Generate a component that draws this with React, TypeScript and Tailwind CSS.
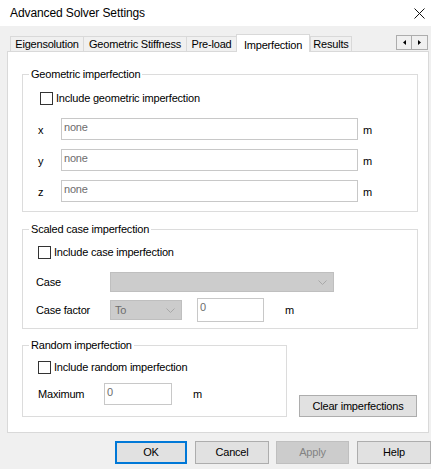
import React from 'react';

const font = { fontFamily: '"Liberation Sans", Arial, sans-serif' };

function CheckBox({ label }: { label: string }) {
    return (
        <label className="flex items-center h-[13px]">
            <span className="w-[13px] h-[13px] border border-[#333333] bg-white shrink-0" />
            <span className="ml-[3px] leading-none">{label}</span>
        </label>
    );
}

function Chevron() {
    return (
        <svg width="9" height="5" viewBox="0 0 9 5" className="shrink-0">
            <path d="M0.5 0.5 L4.5 4.5 L8.5 0.5" fill="none" stroke="#a8a8a8" strokeWidth="1" />
        </svg>
    );
}

function TextBox({ value, placeholder, className }: { value?: string; placeholder?: string; className: string }) {
    return (
        <div className={`border border-[#c8c8c8] bg-white flex items-start pl-[2px] pt-[3px] ${className}`}>
            <span className="text-[#6d6d6d] leading-none">{value ?? placeholder}</span>
        </div>
    );
}

function Group({ title, className, children }: { title: string; className: string; children: React.ReactNode }) {
    return (
        <div className={`relative border border-[#dcdcdc] ${className}`}>
            <span className="absolute -top-[8px] left-[6px] px-[2px] bg-white leading-[14px]">{title}</span>
            {children}
        </div>
    );
}

const tabs = ['Eigensolution', 'Geometric Stiffness', 'Pre-load', 'Imperfection', 'Results'];
const tabWidths = ['w-[73px]', 'w-[103px]', 'w-[50px]', 'w-[74px]', 'w-[42px]'];

export default function App() {
    return (
        <div className="w-[431px] h-[469px] bg-[#f0f0f0] flex flex-col text-[11px] tracking-[-0.2px] text-black" style={font}>
            {/* title bar */}
            <div className="h-[26px] bg-white flex items-center justify-between pl-[10px] pr-[3px] shrink-0">
                <span className="text-[12px] tracking-[-0.1px]">Advanced Solver Settings</span>
                <div className="w-[16px] h-[16px] flex items-center justify-center mr-[1px]">
                    <svg width="11" height="11" viewBox="0 0 11 11">
                        <path d="M0.5 0.5 L10.5 10.5 M10.5 0.5 L0.5 10.5" stroke="#111111" strokeWidth="1" />
                    </svg>
                </div>
            </div>

            {/* tab strip */}
            <div className="flex items-end h-[17px] mt-[8px] pl-[10px] pr-[3px]">
                {tabs.map((t, i) => {
                    const active = t === 'Imperfection';
                    return active ? (
                        <div
                            key={t}
                            className={`${tabWidths[i]} h-[18px] -mb-px relative z-10 bg-white border-x border-t border-[#d9d9d9] flex items-start justify-center pt-[2px]`}
                        >
                            {t}
                        </div>
                    ) : (
                        <div
                            key={t}
                            className={`${tabWidths[i]} h-[15px] border-t border-l ${i === tabs.length - 1 ? 'border-r' : ''} border-[#d9d9d9] flex items-center justify-center pt-[1px]`}
                        >
                            {t}
                        </div>
                    );
                })}
                <div className="ml-auto mb-[1px] flex h-[15px]">
                    <div className="w-[16px] h-[15px] border border-[#adadad] flex items-center justify-center">
                        <svg width="3" height="5" viewBox="0 0 3 5"><path d="M3 0 L0 2.5 L3 5 Z" fill="#000" /></svg>
                    </div>
                    <div className="w-[16px] h-[15px] border border-l-0 border-[#adadad] flex items-center justify-center">
                        <svg width="3" height="5" viewBox="0 0 3 5"><path d="M0 0 L3 2.5 L0 5 Z" fill="#000" /></svg>
                    </div>
                </div>
            </div>

            {/* tab panel */}
            <div className="ml-[7px] w-[422px] h-[382px] bg-white border border-[#d9d9d9] pt-[22px] pl-[14px] flex flex-col">
                <Group title="Geometric imperfection" className="w-[396px] h-[138px] pt-[17px] pl-[17px]">
                    <CheckBox label="Include geometric imperfection" />
                    <div className="flex flex-col gap-[9px] mt-[13px] -ml-[2px]">
                        {['x', 'y', 'z'].map((a) => (
                            <div key={a} className="flex items-center h-[22px]">
                                <span className="w-[23px] pt-[3px]">{a}</span>
                                <TextBox placeholder="none" className="w-[297px] h-[22px]" />
                                <span className="ml-[5px] pt-[3px]">m</span>
                            </div>
                        ))}
                    </div>
                </Group>

                <Group title="Scaled case imperfection" className="w-[396px] h-[100px] mt-[17px] pt-[16px] pl-[15px]">
                    <CheckBox label="Include case imperfection" />
                    <div className="flex items-center h-[20px] mt-[13px] -ml-[2px]">
                        <span className="w-[74px]">Case</span>
                        <div className="w-[224px] h-[20px] bg-[#cccccc] border border-[#bfbfbf] flex items-center justify-end pr-[6px]">
                            <Chevron />
                        </div>
                    </div>
                    <div className="flex items-center h-[24px] mt-[6px] -ml-[2px]">
                        <span className="w-[74px]">Case factor</span>
                        <div className="w-[72px] h-[20px] bg-[#cccccc] border border-[#bfbfbf] flex items-center justify-between pl-[4px] pr-[6px]">
                            <span className="text-[#6d6d6d]">To</span>
                            <Chevron />
                        </div>
                        <TextBox value="0" className="w-[67px] h-[24px] ml-[15px]" />
                        <span className="ml-[21px]">m</span>
                    </div>
                </Group>

                <div className="flex items-end mt-[16px]">
                    <Group title="Random imperfection" className="w-[265px] h-[72px] pt-[15px] pl-[15px]">
                        <CheckBox label="Include random imperfection" />
                        <div className="flex items-center h-[22px] mt-[9px]">
                            <span className="w-[66px]">Maximum</span>
                            <TextBox value="0" className="w-[68px] h-[22px]" />
                            <span className="ml-[21px]">m</span>
                        </div>
                    </Group>
                    <button className="ml-[12px] w-[118px] h-[22px] bg-[#e1e1e1] border border-[#adadad] flex items-center justify-center">
                        Clear imperfections
                    </button>
                </div>
            </div>

            {/* dialog buttons */}
            <div className="flex mt-[8px] pl-[115px]">
                <button className="w-[72px] h-[23px] bg-[#e1e1e1] border-2 border-[#0078d7] flex items-center justify-center">OK</button>
                <button className="w-[74px] h-[23px] ml-[8px] bg-[#e1e1e1] border border-[#adadad] flex items-center justify-center">Cancel</button>
                <button className="w-[73px] h-[23px] ml-[7px] bg-[#cccccc] border border-[#bfbfbf] text-[#838383] flex items-center justify-center">Apply</button>
                <button className="w-[74px] h-[23px] ml-[8px] bg-[#e1e1e1] border border-[#adadad] flex items-center justify-center">Help</button>
            </div>
        </div>
    );
}
